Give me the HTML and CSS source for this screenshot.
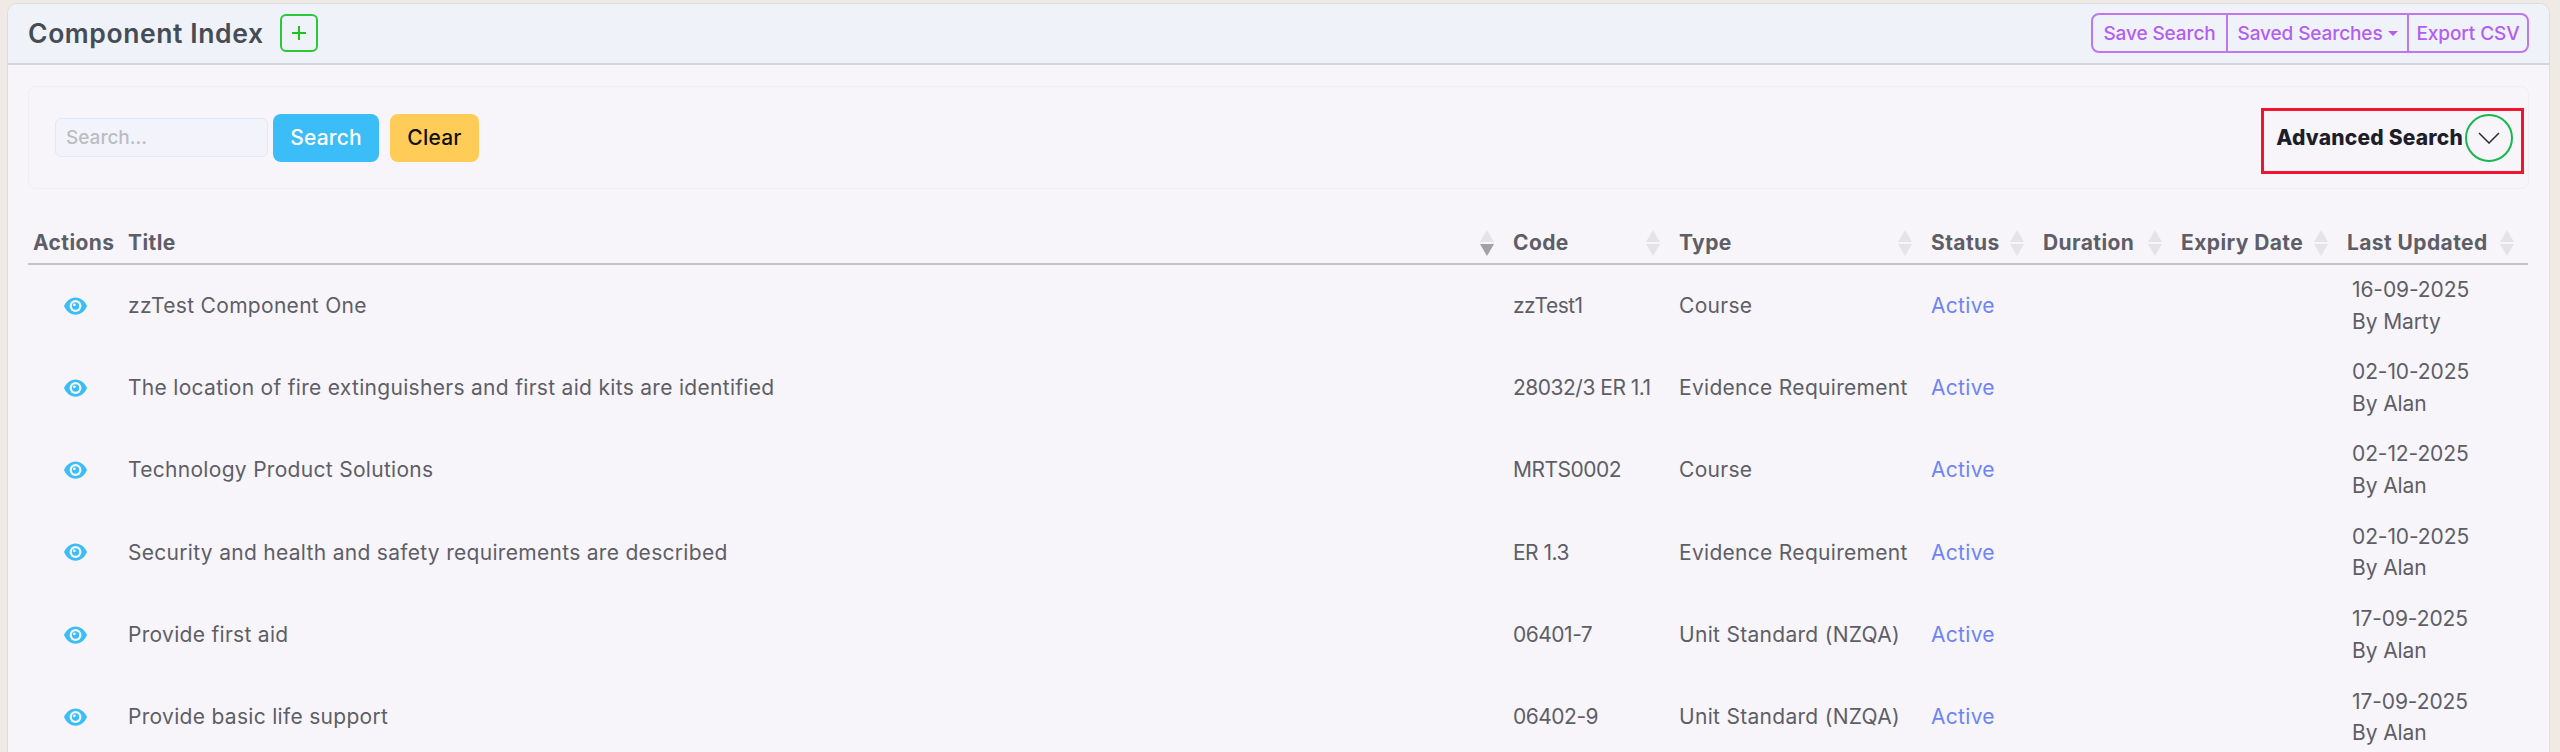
FILE: index.html
```html
<!DOCTYPE html>
<html lang="en">
<head>
    <meta charset="UTF-8">
    <meta name="viewport" content="width=device-width, initial-scale=1.0">
    <title>Component Index</title>
    <link rel="stylesheet" href="styles.css">
</head>
<body>
    <div class="card">
        <div class="card-header">
            <div class="header-left">
                <h1 class="page-title">Component Index</h1>
                <button class="add-button">
                    <svg width="16" height="16" viewBox="0 0 16 16"><path d="M8 1v14M1 8h14" stroke="#1ec41e" stroke-width="2" fill="none"/></svg>
                </button>
            </div>
            <div class="button-group">
                <button class="save-search">Save Search</button>
                <button class="saved-searches">Saved Searches<span class="caret"></span></button>
                <button class="export-csv">Export CSV</button>
            </div>
        </div>
        <div class="card-body">
            <div class="filter-box">
                <div class="search-form">
                    <input class="search-input" type="text" placeholder="Search...">
                    <button class="search-button">Search</button>
                    <button class="clear-button">Clear</button>
                </div>
                <div class="advanced">
                    <span class="advanced-label">Advanced Search</span>
                    <span class="advanced-toggle">
                        <svg width="22" height="12" viewBox="0 0 22 12"><path d="M1 1l10 10L21 1" stroke="#2b2b35" stroke-width="1.5" fill="none"/></svg>
                    </span>
                </div>
            </div>
            <table class="component-table">
                <colgroup>
                    <col class="col-actions">
                    <col class="col-title">
                    <col class="col-code">
                    <col class="col-type">
                    <col class="col-status">
                    <col class="col-duration">
                    <col class="col-expiry">
                    <col class="col-updated">
                </colgroup>
                <thead>
                    <tr>
                        <th>Actions</th>
                        <th><div class="th-inner">Title<svg class="sort" viewBox="0 0 14 26"><path class="up" d="M7 0l7 12H0z"/><path class="down active" d="M0 14h14L7 26z"/></svg></div></th>
                        <th><div class="th-inner">Code<svg class="sort" viewBox="0 0 14 26"><path class="up" d="M7 0l7 12H0z"/><path class="down" d="M0 14h14L7 26z"/></svg></div></th>
                        <th><div class="th-inner">Type<svg class="sort" viewBox="0 0 14 26"><path class="up" d="M7 0l7 12H0z"/><path class="down" d="M0 14h14L7 26z"/></svg></div></th>
                        <th><div class="th-inner">Status<svg class="sort" viewBox="0 0 14 26"><path class="up" d="M7 0l7 12H0z"/><path class="down" d="M0 14h14L7 26z"/></svg></div></th>
                        <th><div class="th-inner">Duration<svg class="sort" viewBox="0 0 14 26"><path class="up" d="M7 0l7 12H0z"/><path class="down" d="M0 14h14L7 26z"/></svg></div></th>
                        <th><div class="th-inner">Expiry Date<svg class="sort" viewBox="0 0 14 26"><path class="up" d="M7 0l7 12H0z"/><path class="down" d="M0 14h14L7 26z"/></svg></div></th>
                        <th><div class="th-inner">Last Updated<svg class="sort" viewBox="0 0 14 26"><path class="up" d="M7 0l7 12H0z"/><path class="down" d="M0 14h14L7 26z"/></svg></div></th>
                    </tr>
                </thead>
                <tbody>
                    <tr>
                        <td class="cell-action"><svg class="eye" viewBox="0 0 24 18"><path d="M12 0C6.500 0 2.200 3.800 0 9c2.200 5.200 6.500 9 12 9s9.800-3.800 12-9c-2.200-5.200-6.500-9-12-9z"/><circle class="eye-ring" cx="12" cy="9" r="6.200"/><circle cx="12" cy="9" r="3.800"/><circle class="eye-ring" cx="10.800" cy="7.800" r="1.500"/></svg></td>
                        <td>zzTest Component One</td>
                        <td class="code">zzTest1</td>
                        <td>Course</td>
                        <td class="status">Active</td>
                        <td></td>
                        <td></td>
                        <td class="updated">16-09-2025<br>By Marty</td>
                    </tr>
                    <tr>
                        <td class="cell-action"><svg class="eye" viewBox="0 0 24 18"><path d="M12 0C6.500 0 2.200 3.800 0 9c2.200 5.200 6.500 9 12 9s9.800-3.800 12-9c-2.200-5.200-6.500-9-12-9z"/><circle class="eye-ring" cx="12" cy="9" r="6.200"/><circle cx="12" cy="9" r="3.800"/><circle class="eye-ring" cx="10.800" cy="7.800" r="1.500"/></svg></td>
                        <td>The location of fire extinguishers and first aid kits are identified</td>
                        <td class="code">28032/3 ER 1.1</td>
                        <td>Evidence Requirement</td>
                        <td class="status">Active</td>
                        <td></td>
                        <td></td>
                        <td class="updated">02-10-2025<br>By Alan</td>
                    </tr>
                    <tr>
                        <td class="cell-action"><svg class="eye" viewBox="0 0 24 18"><path d="M12 0C6.500 0 2.200 3.800 0 9c2.200 5.200 6.500 9 12 9s9.800-3.800 12-9c-2.200-5.200-6.500-9-12-9z"/><circle class="eye-ring" cx="12" cy="9" r="6.200"/><circle cx="12" cy="9" r="3.800"/><circle class="eye-ring" cx="10.800" cy="7.800" r="1.500"/></svg></td>
                        <td>Technology Product Solutions</td>
                        <td class="code">MRTS0002</td>
                        <td>Course</td>
                        <td class="status">Active</td>
                        <td></td>
                        <td></td>
                        <td class="updated">02-12-2025<br>By Alan</td>
                    </tr>
                    <tr>
                        <td class="cell-action"><svg class="eye" viewBox="0 0 24 18"><path d="M12 0C6.500 0 2.200 3.800 0 9c2.200 5.200 6.500 9 12 9s9.800-3.800 12-9c-2.200-5.200-6.500-9-12-9z"/><circle class="eye-ring" cx="12" cy="9" r="6.200"/><circle cx="12" cy="9" r="3.800"/><circle class="eye-ring" cx="10.800" cy="7.800" r="1.500"/></svg></td>
                        <td>Security and health and safety requirements are described</td>
                        <td class="code">ER 1.3</td>
                        <td>Evidence Requirement</td>
                        <td class="status">Active</td>
                        <td></td>
                        <td></td>
                        <td class="updated">02-10-2025<br>By Alan</td>
                    </tr>
                    <tr>
                        <td class="cell-action"><svg class="eye" viewBox="0 0 24 18"><path d="M12 0C6.500 0 2.200 3.800 0 9c2.200 5.200 6.500 9 12 9s9.800-3.800 12-9c-2.200-5.200-6.500-9-12-9z"/><circle class="eye-ring" cx="12" cy="9" r="6.200"/><circle cx="12" cy="9" r="3.800"/><circle class="eye-ring" cx="10.800" cy="7.800" r="1.500"/></svg></td>
                        <td>Provide first aid</td>
                        <td class="code">06401-7</td>
                        <td>Unit Standard (NZQA)</td>
                        <td class="status">Active</td>
                        <td></td>
                        <td></td>
                        <td class="updated">17-09-2025<br>By Alan</td>
                    </tr>
                    <tr>
                        <td class="cell-action"><svg class="eye" viewBox="0 0 24 18"><path d="M12 0C6.500 0 2.200 3.800 0 9c2.200 5.200 6.500 9 12 9s9.800-3.800 12-9c-2.200-5.200-6.500-9-12-9z"/><circle class="eye-ring" cx="12" cy="9" r="6.200"/><circle cx="12" cy="9" r="3.800"/><circle class="eye-ring" cx="10.800" cy="7.800" r="1.500"/></svg></td>
                        <td>Provide basic life support</td>
                        <td class="code">06402-9</td>
                        <td>Unit Standard (NZQA)</td>
                        <td class="status">Active</td>
                        <td></td>
                        <td></td>
                        <td class="updated">17-09-2025<br>By Alan</td>
                    </tr>
                </tbody>
            </table>
        </div>
    </div>
</body>
</html>
```

FILE: styles.css
```css
html, body {
    height: 100%;
    overflow: hidden;
}

body {
    margin: 0;
    padding: 3px 10px 0 7px;
    box-sizing: border-box;
    background: #efebe4;
    font-family: Inter, "Open Sans", sans-serif;
    color: #5e5e68;
}

button {
    font-family: inherit;
    cursor: pointer;
}

.card {
    border: 1px solid #dcdde3;
    border-bottom: none;
    border-radius: 10px 10px 0 0;
    background: #f7f5fa;
    min-height: 100%;
}

.card-header {
    display: flex;
    justify-content: space-between;
    align-items: center;
    height: 58px;
    padding: 0 20px 1px;
    background: #eff2f8;
    border-bottom: 2px solid #d3d6df;
    border-radius: 10px 10px 0 0;
}

.header-left {
    display: flex;
    align-items: center;
    gap: 16px;
}

.page-title {
    margin: 0;
    font-size: 26.5px;
    font-weight: 600;
    color: #454c55;
    letter-spacing: 0.6px;
}

.add-button {
    display: flex;
    justify-content: center;
    align-items: center;
    width: 38px;
    height: 38px;
    padding: 0;
    border: 2px solid #2ac938;
    border-radius: 6px;
    background: transparent;
}

.button-group {
    display: flex;
    height: 40px;
    box-sizing: border-box;
    border: 2px solid #bf77f0;
    border-radius: 8px;
}

.button-group button {
    padding: 0;
    border: none;
    background: transparent;
    color: #b45ef0;
    font-size: 19px;
    font-weight: 500;
    letter-spacing: -0.1px;
    white-space: nowrap;
}

.save-search {
    width: 133px;
}

.button-group .saved-searches {
    width: 183px;
    border-left: 2px solid #bf77f0;
    border-right: 2px solid #bf77f0;
}

.export-csv {
    width: 118px;
}

.caret {
    display: inline-block;
    margin-left: 5px;
    vertical-align: 4px;
    border-top: 5px solid #b45ef0;
    border-left: 5px solid transparent;
    border-right: 5px solid transparent;
}

.card-body {
    padding: 21px 20px 0;
}

.filter-box {
    display: flex;
    justify-content: space-between;
    align-items: center;
    height: 103px;
    box-sizing: border-box;
    padding: 0 15px 0 26px;
    border: 1px solid #f0eef3;
    border-radius: 8px;
}

.search-form {
    display: flex;
    align-items: center;
}

.search-input {
    width: 213px;
    height: 39px;
    box-sizing: border-box;
    padding: 0 10px;
    border: 1px solid #dfe9f8;
    border-radius: 6px;
    background: #f3f4fb;
    font-family: inherit;
    font-size: 19px;
    font-weight: 500;
}

.search-input::placeholder {
    color: #bcbcc2;
}

.search-button,
.clear-button {
    height: 48px;
    border: none;
    border-radius: 8px;
    font-size: 21px;
    font-weight: 500;
    letter-spacing: 0.2px;
}

.search-button {
    width: 106px;
    margin-left: 5px;
    background: #3bbdf8;
    color: #fff;
}

.clear-button {
    width: 89px;
    margin-left: 11px;
    background: #ffcd57;
    color: #111;
}

.advanced {
    position: relative;
    display: flex;
    align-items: center;
    gap: 2px;
}

/* red annotation box drawn over the screenshot */
.advanced::after {
    content: "";
    position: absolute;
    top: -6px;
    bottom: -12px;
    left: -15px;
    right: -11px;
    border: 3px solid #f0152d;
    pointer-events: none;
}

.advanced-label {
    font-size: 21px;
    font-weight: 800;
    color: #1e1e2a;
    letter-spacing: 0.2px;
}

.advanced-toggle {
    display: flex;
    justify-content: center;
    align-items: center;
    width: 48px;
    height: 48px;
    box-sizing: border-box;
    border: 2px solid #18b84e;
    border-radius: 50%;
}

.component-table {
    width: 2500px;
    margin-top: 35px;
    border-collapse: collapse;
    table-layout: fixed;
}

.col-actions { width: 95px; }
.col-title { width: 1385px; }
.col-code { width: 166px; }
.col-type { width: 252px; }
.col-status { width: 112px; }
.col-duration { width: 138px; }
.col-expiry { width: 166px; }
.col-updated { width: 186px; }

.component-table th {
    height: 40px;
    padding: 0 14px 2px 5px;
    box-sizing: border-box;
    border-bottom: 2px solid #c4c4ca;
    font-size: 21px;
    font-weight: 700;
    letter-spacing: 0.4px;
    text-align: left;
    white-space: nowrap;
}

.th-inner {
    display: flex;
    justify-content: space-between;
    align-items: center;
}

.sort {
    width: 14px;
    height: 26px;
}

.sort path {
    fill: #e4e3e8;
}

.sort .active {
    fill: #a0a0a5;
}

.component-table tbody tr {
    height: 82.4px;
}

.component-table td {
    padding: 0 5px;
    font-size: 21px;
    line-height: 31.5px;
    letter-spacing: 0.3px;
    white-space: nowrap;
}

.component-table td.cell-action {
    padding: 0;
}

.eye {
    display: block;
    width: 23px;
    height: 18px;
    margin: 0 auto;
    fill: #3bbdf8;
}

.eye-ring {
    fill: #f7f5fa;
}

.component-table td.code {
    letter-spacing: -0.5px;
}

.status {
    color: #6d84f7;
}

.component-table td.updated {
    padding-left: 10px;
    letter-spacing: -0.1px;
}
```
